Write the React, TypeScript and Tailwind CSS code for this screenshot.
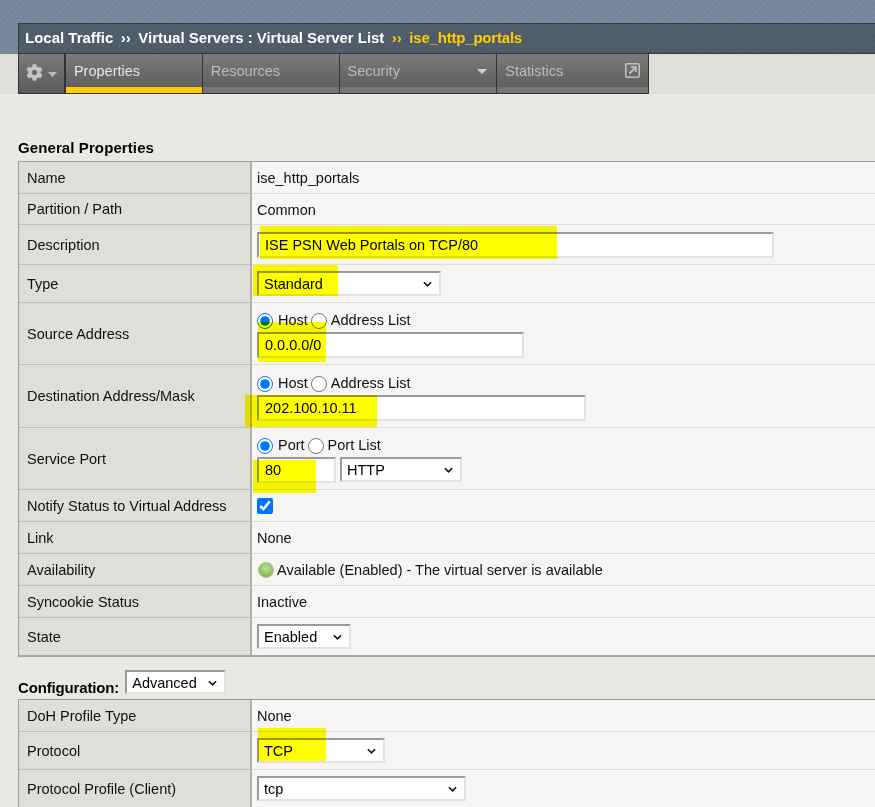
import { FaCog } from 'react-icons/fa';
import type { ReactNode } from 'react';

const inputCls = "h-[26px] border-2 border-t-[#9a9a9a] border-l-[#9a9a9a] border-r-[#e2e2e2] border-b-[#e2e2e2] bg-white px-[6px] text-[14.5px] text-black outline-none";

function Select({ value, width, className = "" }: { value: string; width: string; className?: string }) {
  return (
    <div className={`relative h-[25px] shrink-0 ${width} ${className}`}>
      <select
        className="h-full w-full appearance-none border-2 border-t-[#9a9a9a] border-l-[#9a9a9a] border-r-[#e2e2e2] border-b-[#e2e2e2] bg-white pl-[5px] pt-[1px] text-[14.5px] font-normal tracking-normal text-black outline-none"
        defaultValue={value}
      >
        <option>{value}</option>
      </select>
      <svg width="9" height="6" viewBox="0 0 10 6" fill="none" className="pointer-events-none absolute right-[9px] top-[10px]">
        <path d="M1 1l4 4 4-4" stroke="#111" strokeWidth="1.8" />
      </svg>
    </div>
  );
}

function Row({ label, height, last, children }: { label: string; height: string; last?: boolean; children: ReactNode }) {
  return (
    <div className={`flex ${height} ${last ? 'border-b-2 border-[#a5a5a2]' : ''}`}>
      <div className={`flex w-[233px] shrink-0 items-center bg-[#dfded9] pl-[8px] pt-[2px] border-r-2 border-[#b0afab] ${last ? '' : 'border-b border-b-[#bfbeba]'}`}>
        {label}
      </div>
      <div className={`flex min-w-0 flex-1 flex-col justify-center bg-[#f6f5f3] pl-[5px] ${last ? '' : 'border-b border-b-[#dedddA]'}`}>
        {children}
      </div>
    </div>
  );
}

function Value({ children }: { children: ReactNode }) {
  return <div className="pt-[2px]">{children}</div>;
}

function RadioPair({ first, second, name }: { first: string; second: string; name: string }) {
  return (
    <div className="flex h-[22px] items-center">
      <input type="radio" name={name} defaultChecked className="m-0 h-[16px] w-[16px]" />
      <span className="ml-[5px]">{first}</span>
      <input type="radio" name={name} className="ml-[3px] h-[16px] w-[16px]" />
      <span className="ml-[4px]">{second}</span>
    </div>
  );
}

const highlights = [
  "left-[260px] top-[226px] h-[33px] w-[297px]",
  "left-[253px] top-[265px] h-[31px] w-[85px]",
  "left-[258px] top-[322px] h-[40px] w-[68px]",
  "left-[245px] top-[395px] h-[32px] w-[132px]",
  "left-[253px] top-[460px] h-[33px] w-[63px]",
  "left-[258px] top-[728px] h-[33px] w-[68px]",
];

const tabs = [
  { label: "Properties", width: "w-[137px]", active: true },
  { label: "Resources", width: "w-[137px]" },
  { label: "Security", width: "w-[158px]", menu: true },
  { label: "Statistics", width: "w-[151px]", external: true },
];

export default function App() {
  return (
    <div className="relative h-[807px] w-[875px] overflow-hidden bg-[#e9e8e4] font-['Liberation_Sans',Arial,sans-serif] text-[14.5px] text-[#111]">
      <div className="h-[54px] bg-[repeating-linear-gradient(135deg,#75869a_0px,#75869a_2px,#7a8b9e_2px,#7a8b9e_4px)] pt-[23px]">
        <div className="ml-[18px] flex h-[31px] items-center border-y border-l border-[#333a42] bg-[repeating-linear-gradient(135deg,#4d5a68_0px,#4d5a68_2px,#515e6c_2px,#515e6c_4px)] pl-[6px] text-[15px] font-bold text-white">
          <span>Local Traffic</span>
          <span className="mx-[7.5px]">››</span>
          <span className="tracking-[-0.03px]">Virtual Servers : Virtual Server List</span>
          <span className="mx-[7.5px] text-[#ffcc00]">››</span>
          <span className="tracking-[-0.2px] text-[#ffcc00]">ise_http_portals</span>
        </div>
      </div>

      <div className="h-[40px] bg-[#dfded9]">
        <div className="ml-[18px] flex h-[40px] w-[631px] border-b border-r border-l border-[#333]">
          <div className="flex w-[47px] items-start gap-[5px] border-r-2 border-[#333] bg-gradient-to-b from-[#7b7b7b] to-[#5a5a5a] pl-[7px] pt-[10px]">
            <FaCog className="h-[17px] w-[17px] text-[#c4c4c4]" />
            <svg width="9" height="5" viewBox="0 0 9 5" className="mt-[8px]"><path d="M0 0h9L4.5 5z" fill="#bdbdbd" /></svg>
          </div>
          {tabs.map((tab) => (
            <div key={tab.label} className={`flex ${tab.width} flex-col border-r border-[#333] last:border-r-0`}>
              <div className={`relative flex h-[33px] items-center bg-gradient-to-b from-[#7b7b7b] to-[#5f5f5f] pl-[8px] pt-[2px] ${tab.active ? 'text-[#e6e6e6]' : 'text-[#bdbdbd]'}`}>
                {tab.label}
                {tab.menu && (
                  <svg width="10" height="5" viewBox="0 0 10 5" className="absolute right-[9px] top-[15px]"><path d="M0 0h10L5 5z" fill="#d0d0d0" /></svg>
                )}
                {tab.external && (
                  <svg width="15" height="15" viewBox="0 0 15 15" fill="none" className="absolute right-[8px] top-[9px]">
                    <rect x="0.75" y="0.75" width="13.5" height="13.5" rx="1.5" stroke="#c2c2c2" strokeWidth="1.5" />
                    <path d="M4.5 10.5L10 5M6 4.2h4.8V9" stroke="#c2c2c2" strokeWidth="1.8" />
                  </svg>
                )}
              </div>
              <div className={`h-[6px] ${tab.active ? 'bg-[#ffcc00]' : 'bg-[#747474]'}`} />
            </div>
          ))}
        </div>
      </div>

      <div className="ml-[18px] mt-[45px] h-[20px] text-[15px] font-bold leading-[17px] tracking-[0.1px] text-black">General Properties</div>
      <div className="mt-[2px] ml-[18px] border-t border-l border-[#9c9c99]">
        <Row label="Name" height="h-[32px]"><Value>ise_http_portals</Value></Row>
        <Row label="Partition / Path" height="h-[31px]"><div className="pt-[3px]">Common</div></Row>
        <Row label="Description" height="h-[40px]">
          <input className={`${inputCls} w-[517px]`} defaultValue="ISE PSN Web Portals on TCP/80" />
        </Row>
        <Row label="Type" height="h-[38px]">
          <Select value="Standard" width="w-[184px]" />
        </Row>
        <Row label="Source Address" height="h-[62px]">
          <RadioPair first="Host" second="Address List" name="src" />
          <input className={`${inputCls} w-[267px]`} defaultValue="0.0.0.0/0" />
        </Row>
        <Row label="Destination Address/Mask" height="h-[63px]">
          <div className="pt-[1px]">
            <RadioPair first="Host" second="Address List" name="dst" />
            <input className={`${inputCls} w-[329px]`} defaultValue="202.100.10.11" />
          </div>
        </Row>
        <Row label="Service Port" height="h-[62px]">
          <RadioPair first="Port" second="Port List" name="port" />
          <div className="flex items-center gap-[4px]">
            <input className={`${inputCls} w-[79px]`} defaultValue="80" />
            <Select value="HTTP" width="w-[122px]" />
          </div>
        </Row>
        <Row label="Notify Status to Virtual Address" height="h-[32px]">
          <input type="checkbox" defaultChecked className="m-0 h-[16px] w-[16px]" />
        </Row>
        <Row label="Link" height="h-[32px]"><Value>None</Value></Row>
        <Row label="Availability" height="h-[32px]">
          <div className="flex items-center gap-[3px]">
            <span className="ml-[1px] h-[16px] w-[16px] shrink-0 rounded-full border border-[#a6c690] bg-[radial-gradient(circle_at_50%_35%,#bfe09a,#80b852_75%)]" />
            <Value>Available (Enabled) - The virtual server is available</Value>
          </div>
        </Row>
        <Row label="Syncookie Status" height="h-[32px]"><Value>Inactive</Value></Row>
        <Row label="State" height="h-[39px]" last>
          <Select value="Enabled" width="w-[94px]" />
        </Row>
      </div>

      <div className="ml-[18px] mt-[13px] flex h-[29px] items-start text-[15px] font-bold tracking-[-0.15px] text-black">
        <span className="mt-[7px]">Configuration:</span>
        <Select value="Advanced" width="w-[101px]" className="ml-[6px] !h-[24px]" />
      </div>
      <div className="ml-[18px] border-t border-l border-[#9c9c99]">
        <Row label="DoH Profile Type" height="h-[32px]"><Value>None</Value></Row>
        <Row label="Protocol" height="h-[38px]">
          <Select value="TCP" width="w-[128px]" />
        </Row>
        <Row label="Protocol Profile (Client)" height="h-[38px]">
          <Select value="tcp" width="w-[209px]" />
        </Row>
      </div>

      {highlights.map((cls) => (
        <div key={cls} className={`pointer-events-none absolute bg-[#ffff00] mix-blend-multiply ${cls}`} />
      ))}
    </div>
  );
}
